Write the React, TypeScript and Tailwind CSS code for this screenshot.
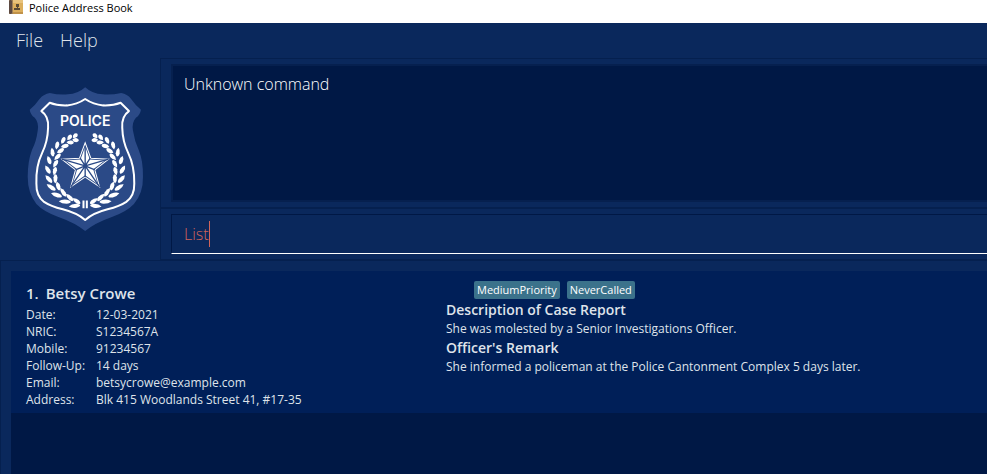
import React from "react";

const details = [
  ["Date:", "12-03-2021"],
  ["NRIC:", "S1234567A"],
  ["Mobile:", "91234567"],
  ["Follow-Up:", "14 days"],
  ["Email:", "betsycrowe@example.com"],
  ["Address:", "Blk 415 Woodlands Street 41, #17-35"],
];

// Leaves of the left laurel branch: x, y, half length, rotation.
const leaves = [
  [180, 182, 9, -42], [181, 195, 10, 8],
  [163, 187, 10, -50], [165, 202, 11, 5],
  [144, 196, 11, -62], [149, 213, 12, -14],
  [126, 211, 12, -78], [136, 227, 12, -30],
  [112, 231, 13, 82], [127, 245, 13, -45],
  [102, 255, 13, 70], [121, 266, 13, -60],
  [98, 283, 14, 58], [119, 288, 13, -76],
  [101, 311, 15, 48], [121, 311, 14, -88],
  [108, 336, 16, 34], [129, 332, 14, 72],
  [124, 359, 17, 18], [144, 351, 15, 56],
  [149, 379, 18, 4], [163, 366, 15, 46],
  [178, 392, 17, -6], [184, 377, 14, 34],
];

function Branch() {
  return (
    <g fill="#fff">
      {leaves.map(([x, y, r, angle], i) => (
        <path
          key={i}
          d={`M${-r} 0Q${-r / 2} -7 ${r / 3} -6Q${r} -4 ${r} 0Q${r} 4 ${r / 3} 6Q${-r / 2} 7 ${-r} 0Z`}
          transform={`translate(${x} ${y}) rotate(${angle})`}
        />
      ))}
    </g>
  );
}

function Badge() {
  return (
    <svg viewBox="36 36 350 434" className="h-[145px] w-[117px]" role="img" aria-label="Police">
      <path
        fill="#2b4a87"
        d="M210 37Q232 57 262 58Q290 60 318 54Q336 57 347 71Q360 90 377 104Q375 119 362 128Q349 142 353 166Q358 198 370 224Q384 258 383 305Q384 354 356 386Q334 409 292 424Q238 443 210 467Q182 443 128 424Q86 409 64 386Q38 354 38 305Q38 258 51 224Q64 198 68 166Q72 142 59 128Q46 119 44 104Q61 90 74 71Q86 57 104 54Q130 60 158 58Q188 57 210 37Z"
      />
      <path
        fill="none"
        stroke="#fff"
        strokeWidth="6"
        strokeLinejoin="round"
        d="M210 72Q235 89 264 91Q294 92 316 83L341 108Q318 124 321 158Q322 199 339 234Q358 273 357 325Q358 362 333 380Q314 393 277 402Q234 413 210 434Q186 413 143 402Q106 393 87 380Q63 362 64 325Q62 273 81 234Q98 199 99 158Q102 124 79 108L104 83Q126 92 156 91Q185 89 210 72Z"
      />
      <text x="210" y="152" textAnchor="middle" fill="#fff" fontFamily="Inter, sans-serif" fontWeight="600" fontSize="42">
        POLICE
      </text>
      <Branch />
      <g transform="translate(420 0) scale(-1 1)">
        <Branch />
      </g>
      <path fill="#fff" d="M202 376h6v23h-6zM212 376h6v23h-6z" />
      <path
        fill="none"
        stroke="#fff"
        strokeWidth="3"
        d="M210 203L227 249L280 252L239 284L253 335L210 306L167 335L181 284L140 252L193 249Z"
      />
      <path fill="#fff" d="M210 214L224 253L269 256L234 282L247 326L210 300L173 326L186 282L151 256L196 253Z" />
      <path
        stroke="#2b4a87"
        strokeWidth="4"
        d="M210 272V214M210 272L280 252M210 272L253 335M210 272L167 335M210 272L140 252M210 272L225 249M210 272L239 284M210 272V306M210 272L181 284M210 272L195 249"
      />
    </svg>
  );
}

function BookIcon() {
  return (
    <svg viewBox="0 0 14 14" className="h-[14px] w-[14px]" aria-hidden="true">
      <rect width="14" height="14" rx="1" fill="#dcae5c" />
      <rect width="3" height="14" rx="1" fill="#5d4a42" />
      <rect x="3" width="1" height="14" fill="#a08058" />
      <rect x="4" width="10" height="3" fill="#e8c27c" />
      <rect x="4" y="12" width="10" height="2" fill="#c0924a" />
      <path d="M7 4h3v3H9v1h2v2H5V8h3V7H7z" fill="#5a4a35" />
    </svg>
  );
}

export default function App() {
  return (
    <div className="flex min-h-screen flex-col overflow-hidden bg-[#0a285c] font-['Open_Sans',sans-serif] text-[#dfe3ea]">
      <header className="flex h-[23px] items-start gap-[6px] bg-white pl-[9px] text-black">
        <BookIcon />
        <h1 className="text-[11px] leading-[16px]">Police Address Book</h1>
      </header>

      <nav className="flex h-[35px] items-center gap-[17px] pb-[2px] pl-4 text-[18px] font-light leading-[24px]">
        <button type="button">File</button>
        <button type="button">Help</button>
      </nav>

      <div className="flex">
        <aside className="flex w-[160px] shrink-0 justify-center pl-[10px] pt-[29px]">
          <Badge />
        </aside>
        <main className="min-w-0 flex-1 border-l border-[#05204f]">
          <section className="border-b-2 border-t border-[#05204f] py-[5px] pl-[10px]">
            <div className="border-2 border-r-0 border-[#06204f] bg-[#001845]">
              <textarea
                readOnly
                aria-label="Result"
                defaultValue="Unknown command"
                className="block h-[134px] w-full resize-none bg-transparent px-[11px] py-[6px] text-[16px] font-light leading-[24px] text-white outline-none"
              />
            </div>
          </section>
          <section className="border-b border-[#05204f] pb-[5px] pl-[10px] pt-[5px]">
            <div className="flex h-[40px] items-center border-b border-l border-t border-b-white border-l-[#001845] border-t-[#001845] pl-3">
              <input
                aria-label="Command"
                defaultValue="List"
                className="field-sizing-content h-[26px] border-r border-[#d0655b] bg-transparent text-[16px] font-light leading-[24px] text-[#d0655b] outline-none"
              />
            </div>
          </section>
        </main>
      </div>

      <section className="flex flex-1 flex-col border-l border-t border-[#05204f] pl-[10px] pt-[10px]">
        <div className="flex-1 bg-[#001845]">
          <article className="flex min-h-[142px] bg-[#001f58] pl-[15px] pt-[10px]">
            <div className="w-[420px] shrink-0 pt-[2px]">
              <h2 className="flex gap-[7px] text-[15px] font-semibold leading-[20px]">
                <span>1.</span>
                <span>Betsy Crowe</span>
              </h2>
              <dl className="mt-[3px] text-[12px] leading-[17px]">
                {details.map(([label, value]) => (
                  <div key={label} className="flex">
                    <dt className="w-[70px]">{label}</dt>
                    <dd>{value}</dd>
                  </div>
                ))}
              </dl>
            </div>
            <div className="min-w-0 flex-1">
              <div className="flex gap-[7px] pl-7 text-[11px] leading-[18px] text-white">
                <span className="rounded-xs bg-[#3b728b] px-[3px]">MediumPriority</span>
                <span className="rounded-xs bg-[#3b728b] px-[3px]">NeverCalled</span>
              </div>
              <h3 className="text-[14px] font-semibold leading-[21px]">Description of Case Report</h3>
              <p className="text-[12px] leading-[17px]">She was molested by a Senior Investigations Officer.</p>
              <h3 className="text-[14px] font-semibold leading-[21px]">Officer's Remark</h3>
              <p className="text-[12px] leading-[17px]">
                She informed a policeman at the Police Cantonment Complex 5 days later.
              </p>
            </div>
          </article>
        </div>
      </section>
    </div>
  );
}
